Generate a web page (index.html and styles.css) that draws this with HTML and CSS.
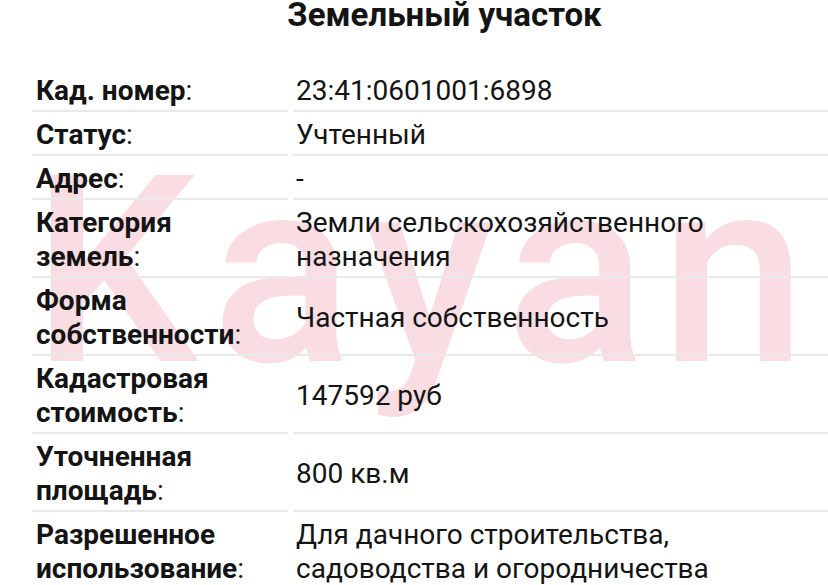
FILE: index.html
```html
<!DOCTYPE html>
<html lang="ru">
<head>
<meta charset="utf-8">
<link rel="stylesheet" href="styles.css">
</head>
<body>
<div class="page">
  <div class="watermark">Kayan</div>
  <h1 class="title">Земельный участок</h1>
  <div class="grid">
    <div class="cell label"><span class="txt"><b>Кад. номер</b>:</span></div>
    <div class="cell value">23:41:0601001:6898</div>

    <div class="cell label"><span class="txt"><b>Статус</b>:</span></div>
    <div class="cell value">Учтенный</div>

    <div class="cell label"><span class="txt"><b>Адрес</b>:</span></div>
    <div class="cell value">-</div>

    <div class="cell label"><span class="txt"><b>Категория земель</b>:</span></div>
    <div class="cell value">Земли сельскохозяйственного назначения</div>

    <div class="cell label"><span class="txt"><b>Форма собственности</b>:</span></div>
    <div class="cell value">Частная собственность</div>

    <div class="cell label"><span class="txt"><b>Кадастровая стоимость</b>:</span></div>
    <div class="cell value">147592 руб</div>

    <div class="cell label"><span class="txt"><b>Уточненная площадь</b>:</span></div>
    <div class="cell value">800 кв.м</div>

    <div class="cell label"><span class="txt"><b>Разрешенное использование</b>:</span></div>
    <div class="cell value">Для дачного строительства, садоводства и огородничества</div>
  </div>
</div>
</body>
</html>
```

FILE: styles.css
```css
html, body {
  margin: 0;
  padding: 0;
  background: #ffffff;
  overflow: hidden;
}

.page {
  position: relative;
  width: 828px;
  height: 585px;
  overflow: hidden;
  font-family: Roboto, "Noto Sans", sans-serif;
  color: #141414;
}

.watermark {
  position: absolute;
  left: 32px;
  top: 122px;
  font-family: Roboto, sans-serif;
  font-weight: 500;
  font-size: 262px;
  line-height: 300px;
  color: #fadde2;
  letter-spacing: 14px;
  z-index: 0;
  white-space: nowrap;
}

.title {
  position: relative;
  z-index: 1;
  margin: 0;
  padding: 0 0 0 61px;
  height: 68px;
  text-align: center;
  font-size: 33px;
  line-height: 30px;
  font-weight: 700;
  color: #141414;
}

.grid {
  position: relative;
  z-index: 1;
  display: grid;
  grid-template-columns: 256px 1fr;
  column-gap: 5px;
  margin-left: 32px;
  margin-right: -20px;
  font-size: 28px;
  line-height: 34px;
}

.cell {
  padding: 6px 4px 2px 4px;
  border-bottom: 2px solid #e9e9e9;
}

.label .txt {
  display: block;
  max-width: 215px;
}

.label b {
  font-weight: 700;
}

.value {
  display: flex;
  align-items: center;
  padding-left: 3px;
}
```
